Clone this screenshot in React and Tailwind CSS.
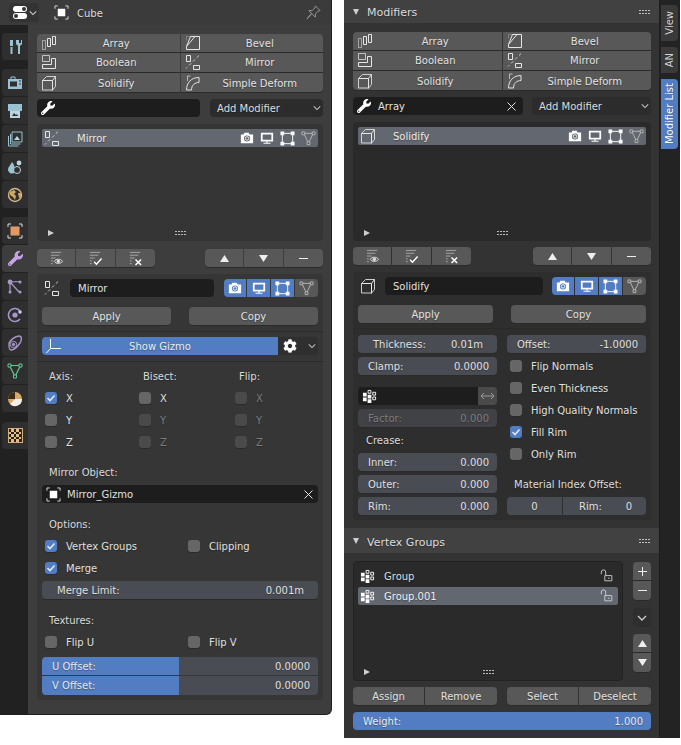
import { FaWrench, FaCog } from "react-icons/fa";

const Svg = ({ s = 16, className = "", children }) => (
  <svg width={s} height={s} viewBox="0 0 16 16" fill="none" stroke="currentColor" strokeWidth="1" className={`shrink-0 ${className}`}>
    {children}
  </svg>
);

const ArrayIcon = () => (
  <Svg>
    <path d="M1.5 5.5h3v9h-3z" opacity=".55" />
    <path d="M6.5 3.5h3v8h-3zM11.5 1.5h3v8h-3z" />
  </Svg>
);
const BevelIcon = () => (
  <Svg>
    <path d="M5.5 1.5h9v13h-13v-3z" />
    <path d="M5.5 1.5L1.5 1.5v4" opacity=".3" />
    <path d="M1.5 11.5L10 1.5" />
  </Svg>
);
const BooleanIcon = () => (
  <Svg>
    <path d="M1.5 1.5h7v6h-7z" opacity=".75" />
    <path d="M10.5 4.5h4v10h-13v-4h9z" />
  </Svg>
);
const MirrorIcon = () => (
  <Svg>
    <path d="M1.5 1.5h4v6h-4zM8.5 11.5h6v4h-6z" />
    <path d="M14 1.5L1 14.5" strokeDasharray="3 2.5" opacity=".8" />
  </Svg>
);
const SolidifyIcon = () => (
  <Svg>
    <path d="M1.5 5.5L5.5 1.5h9v10l-3 3.5h-10z" opacity=".85" />
    <path d="M1.5 5.5h10v10M11.5 5.5l3-4" />
  </Svg>
);
const DeformIcon = () => (
  <Svg>
    <path d="M1.5 15C1.5 8 6 2.5 14 2.5v5C10 7.5 6.5 10 6.5 15z" />
    <path d="M2.5 1h3M2.5 1v5" opacity=".7" />
  </Svg>
);
const CameraIcon = ({ dark = "#5f646c" }) => (
  <Svg s={14} className="text-white">
    <path d="M1 4h3l1-2h5l1 2h4v10H1z" fill="currentColor" stroke="none" />
    <circle cx="8" cy="8.5" r="3.5" fill={dark} stroke="none" />
    <circle cx="8" cy="8.5" r="2" fill="none" stroke="currentColor" />
  </Svg>
);
const MonitorIcon = () => (
  <Svg s={14} className="text-white">
    <path d="M2 3h12v8H2z" strokeWidth="2" />
    <path d="M4 14h8M8 11v3" strokeWidth="1.2" />
  </Svg>
);
const EditIcon = () => (
  <Svg s={15} className="text-white">
    <path d="M2.5 2.5h11v11h-11z" />
    <path d="M0.5 0.5h4v4h-4zM11.5 0.5h4v4h-4zM0.5 11.5h4v4h-4zM11.5 11.5h4v4h-4z" fill="currentColor" stroke="none" />
  </Svg>
);
const TriIcon = () => (
  <Svg s={15} className="text-[#b9b9b9]">
    <path d="M3 2.5h10L8 13z" />
    <path d="M1 1h3v3H1zM12 1h3v3h-3zM6.5 11.5h3v3h-3z" fill="#5a5a5a" />
  </Svg>
);
const ListEye = ({ x }) => (
  <Svg s={15} className="text-[#e0e0e0]">
    <path d="M2 1.5h11M2 4.5h9M2 7.5h5M2 10.5h2M2 13.5h2" opacity=".6" />
    {x === "eye" && (
      <>
        <path d="M5.5 11c2-3 7-3 9 0-2 3-7 3-9 0z" />
        <circle cx="10" cy="11" r="1.4" fill="currentColor" />
      </>
    )}
    {x === "check" && <path d="M6.5 11.5l2.5 2.5 5.5-6" strokeWidth="1.5" stroke="#fff" />}
    {x === "x" && <path d="M8 9l6 6M14 9l-6 6" strokeWidth="1.6" stroke="#fff" />}
  </Svg>
);
const VGroupIcon = () => (
  <Svg s={15} className="text-white">
    <path d="M1 4h4v4H1zM1 9h4v4H1zM6 6h4v4H6zM6 11h4v4H6z" fill="currentColor" stroke="none" />
    <path d="M6.5 1.5h3v3h-3zM11.5 3.5h3v3h-3zM11.5 8.5h3v3h-3z" />
  </Svg>
);
const LockIcon = () => (
  <Svg s={14} className="text-[#d5d5d5]">
    <path d="M1.5 6V3.5a2.5 2.5 0 0 1 5 0V7" />
    <path d="M5.5 7.5h8v6h-8z" />
    <path d="M9 10.5h2" />
  </Svg>
);
const Grip = () => (
  <div className="grid grid-cols-4 gap-x-px gap-y-[2px]">
    {Array.from({ length: 8 }).map((_, i) => (
      <div key={i} className="w-[2px] h-[1px] bg-[#bdbdbd]" />
    ))}
  </div>
);

const Chevron = ({ className = "" }) => (
  <svg width="10" height="6" viewBox="0 0 10 6" fill="none" stroke="currentColor" strokeWidth="1.3" className={className}>
    <path d="M1 1l4 4 4-4" />
  </svg>
);
const Tri = ({ down }) => (
  <svg width="9" height="7" viewBox="0 0 9 7" fill="#eee" className={down ? "rotate-180" : ""}>
    <path d="M4.5 0L9 7H0z" />
  </svg>
);

const Cell = ({ children, className = "" }) => (
  <div className={`flex items-center justify-center bg-[#585858] text-[#e2e2e2] shadow-[0_1px_0_#2a2a2a] ${className}`}>
    {typeof children === "string" ? <span>{children}</span> : children}
  </div>
);

const OpBtn = ({ icon, label, h, radius = "" }) => (
  <div className={`${h} ${radius} flex items-center bg-[#585858] text-[#e2e2e2] pl-[4px] shadow-[0_1px_0_#2a2a2a]`}>
    <div className="w-[16px] shrink-0 text-[#e6e6e6]">{icon}</div>
    <span className="flex-1 text-center pr-[4px]">{label}</span>
  </div>
);

const OpsGrid = () => (
  <div className="grid grid-cols-2 gap-x-px">
    <OpBtn icon={<ArrayIcon />} label="Array" h="h-[18px]" radius="rounded-tl-[4px]" />
    <OpBtn icon={<BevelIcon />} label="Bevel" h="h-[18px]" radius="rounded-tr-[4px]" />
    <OpBtn icon={<BooleanIcon />} label="Boolean" h="h-[19px] mt-px pb-[2px]" />
    <OpBtn icon={<MirrorIcon />} label="Mirror" h="h-[19px] mt-px pb-[2px]" />
    <OpBtn icon={<SolidifyIcon />} label="Solidify" h="h-[19px] mt-px" radius="rounded-bl-[4px]" />
    <OpBtn icon={<DeformIcon />} label="Simple Deform" h="h-[19px] mt-px" radius="rounded-br-[4px]" />
  </div>
);

const SearchRow = ({ text, fieldW, gap, addW }) => (
  <div className="flex mt-[7px] h-[18px]">
    <div className={`${fieldW} flex items-center bg-[#1d1d1d] rounded-[4px] pl-[4px] pr-[5px] text-white`}>
      <FaWrench className="w-[14px] h-[14px] shrink-0" />
      {text && <span className="ml-[7px] flex-1 text-[#e2e2e2]">{text}</span>}
      {text && <CloseX />}
    </div>
    <div className={`${addW} ${gap} flex items-center justify-between bg-[#2c2c2c] rounded-[4px] pl-[7px] pr-[2px] text-[#dedede]`}>
      <span>Add Modifier</span>
      <Chevron className="w-[8px] text-[#c4c4c4]" />
    </div>
  </div>
);

const CloseX = () => (
  <svg width="9" height="9" viewBox="0 0 9 9" stroke="#e6e6e6" strokeWidth="1" className="shrink-0 mr-[2px]">
    <path d="M.5.5l8 8M8.5.5l-8 8" />
  </svg>
);

const ListBox = ({ icon, label, height, bg }) => (
  <div className={`${height} ${bg} mt-[7px] rounded-[4px] p-[5px] pb-[3px] flex flex-col justify-between`}>
    <div className="h-[18px] flex items-center bg-[#63676f] rounded-[2px] pl-[2px] pr-[2px] text-[#ececec]">
      <div className="w-[33px] shrink-0 text-[#e6e6e6]">{icon}</div>
      <span className="flex-1">{label}</span>
      <div className="flex items-center gap-[6px]">
        <CameraIcon />
        <MonitorIcon />
        <EditIcon />
        <TriIcon />
      </div>
    </div>
    <div className="flex items-center h-[10px]">
      <svg width="6" height="6" viewBox="0 0 6 6" fill="#cfcfcf" className="ml-[6px]">
        <path d="M0 0l6 3-6 3z" />
      </svg>
      <div className="flex-1 flex justify-center pr-[12px]"><Grip /></div>
    </div>
  </div>
);

const Toolbar = ({ mt }) => (
  <div className={`flex justify-between h-[18px] ${mt}`}>
    <div className="flex gap-px">
      <Cell className="w-[38px] rounded-l-[4px]"><ListEye x="eye" /></Cell>
      <Cell className="w-[39px]"><ListEye x="check" /></Cell>
      <Cell className="w-[39px] rounded-r-[4px]"><ListEye x="x" /></Cell>
    </div>
    <div className="flex gap-px">
      <Cell className="w-[38px] rounded-l-[4px]"><Tri /></Cell>
      <Cell className="w-[39px]"><Tri down /></Cell>
      <Cell className="w-[39px] rounded-r-[4px]"><div className="w-[9px] h-[1px] bg-[#eee]" /></Cell>
    </div>
  </div>
);

const Toggles = () => (
  <div className="flex gap-px h-[18px] shrink-0">
    <div className="w-[22px] rounded-l-[4px] bg-[#527dc2] flex items-center justify-center"><CameraIcon dark="#527dc2" /></div>
    <div className="w-[23px] bg-[#527dc2] flex items-center justify-center"><MonitorIcon /></div>
    <div className="w-[23px] bg-[#527dc2] flex items-center justify-center"><EditIcon /></div>
    <div className="w-[23px] rounded-r-[4px] bg-[#585858] flex items-center justify-center"><TriIcon /></div>
  </div>
);

const BoxHeader = ({ icon, name, nameW, gapL }) => (
  <div className="flex items-center h-[18px]">
    <div className="w-[28px] pl-[2px] shrink-0 text-[#e6e6e6]">{icon}</div>
    <div className={`${nameW} h-[18px] flex items-center bg-[#1d1d1d] rounded-[4px] pl-[8px] text-[#e2e2e2]`}><span>{name}</span></div>
    <div className={gapL}><Toggles /></div>
  </div>
);

const Label = ({ children, className = "" }) => (
  <div className={`h-[14px] flex items-center text-[#dcdcdc] ${className}`}><span>{children}</span></div>
);

const Check = ({ label, on, off, w = "" }) => (
  <div className={`flex items-center h-[22px] ${w}`}>
    <div className={`w-[12px] h-[12px] rounded-[3px] flex items-center justify-center shadow-[0_1px_0_#2a2a2a] ${on ? "bg-[#527dc2]" : off ? "bg-[#4a4a4a]" : "bg-[#666666]"}`}>
      {on && (
        <svg width="10" height="10" viewBox="0 0 10 10" fill="none" stroke="#dfe8f5" strokeWidth="1.6">
          <path d="M1.5 5l2.5 2.5 4.5-5" />
        </svg>
      )}
    </div>
    <span className={`ml-[9px] ${off ? "text-[#7d7d7d]" : "text-[#e0e0e0]"}`}>{label}</span>
  </div>
);

const Num = ({ label, value, className = "", pl = "pl-[10px]", pr = "pr-[8px]", dim }) => (
  <div className={`h-[18px] flex items-center justify-between rounded-[4px] shadow-[0_1px_0_#2a2a2a] ${pl} ${pr} ${dim ? "bg-[#414246] text-[#7e7e7e]" : "bg-[#4a4c54] text-[#e0e0e0]"} ${className}`}>
    <span>{label}</span>
    <span>{value}</span>
  </div>
);

const Slider = ({ label, value, h, rounded, className = "" }) => (
  <div className={`${h} flex ${rounded} overflow-hidden ${className}`}>
    <div className="w-[137px] bg-[#527dc2] flex items-center pl-[10px] text-[#e8e8e8]"><span>{label}</span></div>
    <div className="flex-1 bg-[#4a4c54] flex items-center justify-end pr-[8px] text-[#e0e0e0]"><span>{value}</span></div>
  </div>
);

const Sep = ({ className = "" }) => <div className={`h-px -mx-[5px] bg-[#2a2a2a] ${className}`} />;

const TwoBtn = ({ w }) => (
  <div className="flex justify-between mt-[10px] h-[18px]">
    <Cell className={`${w} rounded-[4px]`}>Apply</Cell>
    <Cell className={`${w} rounded-[4px]`}>Copy</Cell>
  </div>
);

const SideTab = ({ active, children, className = "" }) => (
  <div className={`h-[28px] ml-[2px] rounded-l-[4px] flex items-center justify-center border-b border-[#222] ${active ? "bg-[#3d3d3d]" : "bg-[#2f2f2f]"} ${className}`}>
    {children}
  </div>
);

const Sidebar = () => (
  <div className="w-[28px] shrink-0 bg-[#212121] pt-[8px]">
    <SideTab>
      <Svg className="text-[#9ac2d2]">
        <path d="M3 1h3v6H3zM3.5 8h2v7h-2z" fill="currentColor" stroke="none" />
        <path d="M9 1v4l2 2v8h2V7l2-2V1l-1 0v3h-2V1z" fill="currentColor" stroke="none" />
      </Svg>
    </SideTab>
    <div className="mt-[8px]">
      <SideTab>
        <Svg className="text-[#9ac2d2]">
          <path d="M1 4h14v10H1z" fill="currentColor" stroke="none" />
          <path d="M4 4V2h4v2" />
          <path d="M3 6.5h7v5H3z" fill="#2f2f2f" stroke="none" />
          <path d="M12 6h2M12 9h2" stroke="#2f2f2f" />
        </Svg>
      </SideTab>
      <SideTab>
        <Svg className="text-[#9ac2d2]">
          <path d="M1 1h14v7H1z" fill="currentColor" stroke="none" />
          <path d="M3 8h10v7H3z" fill="#bcd6df" stroke="none" />
          <path d="M5 13l2-3 2 2 1-1 1 2z" fill="#2f2f2f" stroke="none" />
        </Svg>
      </SideTab>
      <SideTab>
        <Svg className="text-[#9ac2d2]">
          <path d="M1.5 5v10h10M3.5 3v10h10" />
          <path d="M5 1h10v10H5z" fill="#2f2f2f" stroke="currentColor" />
          <path d="M7 9l3-4 3 4z" fill="#bcd6df" stroke="none" />
        </Svg>
      </SideTab>
      <SideTab>
        <Svg className="text-[#9ac2d2]">
          <path d="M5 3c-2 4-4 5-4 8a4 4 0 0 0 6 3c1-3 1-8-2-11z" fill="currentColor" stroke="none" />
          <circle cx="12" cy="4" r="2.4" fill="#bcd6df" stroke="none" />
          <circle cx="10" cy="11" r="3.5" fill="#2f2f2f" stroke="#bcd6df" />
        </Svg>
      </SideTab>
      <SideTab>
        <Svg className="text-[#d2a868]">
          <circle cx="8" cy="8" r="6.5" fill="#2f2f2f" stroke="#d2b78a" strokeWidth="1.4" />
          <path d="M3 5l4-2 2 2-2 2 2 2-1 4-2-3-3-2zM11 6l3 0v4l-2 1z" fill="currentColor" stroke="none" />
        </Svg>
      </SideTab>
    </div>
    <div className="mt-[8px]">
      <SideTab>
        <Svg className="text-[#e09a66]">
          <path d="M3.5 3.5h9v9h-9z" fill="currentColor" stroke="none" />
          <path d="M1 4V1h3M12 1h3v3M15 12v3h-3M4 15H1v-3" stroke="#dcdcdc" />
        </Svg>
      </SideTab>
      <SideTab active>
        <FaWrench className="w-[15px] h-[15px] text-[#c7a6e6]" />
      </SideTab>
      <SideTab>
        <Svg className="text-[#a897c8]">
          <path d="M3 3l10-.5M3 3l9 10M3 3v9" strokeWidth="1.2" />
          <circle cx="3" cy="3" r="2.4" fill="currentColor" stroke="none" />
          <circle cx="13" cy="3" r="1.5" fill="currentColor" stroke="none" />
          <circle cx="3" cy="13" r="1.5" fill="currentColor" stroke="none" />
          <circle cx="13" cy="13" r="1.5" fill="currentColor" stroke="none" />
        </Svg>
      </SideTab>
      <SideTab>
        <Svg className="text-[#a897c8]">
          <path d="M13 4a6.5 6.5 0 1 0 0 8" strokeWidth="1.6" />
          <circle cx="8" cy="8" r="2.6" fill="currentColor" stroke="none" />
          <circle cx="13" cy="5" r="1.8" fill="#d0c4e6" stroke="none" />
        </Svg>
      </SideTab>
      <SideTab>
        <Svg className="text-[#a897c8]">
          <path d="M2 9c0-3 6-8 10-8 3 0 3 4 1 7s-6 7-9 7c-2 0-2-3-2-6z" strokeWidth="1.4" />
          <circle cx="6.5" cy="9.5" r="3.2" />
          <circle cx="6.5" cy="9.5" r="1.2" fill="currentColor" />
        </Svg>
      </SideTab>
      <SideTab>
        <Svg className="text-[#63c795]">
          <path d="M2.5 2.5h11L8 13.5z" strokeWidth="1.2" />
          <path d="M1 1h3v3H1zM12 1h3v3h-3zM6.5 12h3v3h-3z" fill="#2f2f2f" />
        </Svg>
      </SideTab>
      <SideTab>
        <Svg>
          <circle cx="8" cy="8" r="7" fill="#d7a866" stroke="none" />
          <path d="M8 8V1a7 7 0 0 0-7 7z" fill="#3a2c1a" stroke="none" />
          <path d="M8 8h7a7 7 0 0 1-12 5z" fill="#f4f0e8" stroke="none" />
        </Svg>
      </SideTab>
    </div>
    <div className="mt-[9px]">
      <SideTab>
        <div className="w-[15px] h-[15px] grid grid-cols-5 border border-[#d2ae78]">
          {Array.from({ length: 25 }).map((_, i) => (
            <div key={i} className={i % 2 === 0 ? "bg-[#2a2015]" : "bg-[#e0bd88]"} />
          ))}
        </div>
      </SideTab>
    </div>
  </div>
);

const LeftPanel = () => (
  <div className="w-[332px] h-[715px] shrink-0 flex flex-col bg-[#3d3d3d] rounded-br-[6px] overflow-hidden border-r border-b border-[#1f1f1f]">
    <div className="h-[25px] shrink-0 flex items-center bg-[#3b3b3b] pl-[9px] pr-[10px]">
      <div className="w-[30px] h-[19px] flex items-center gap-[2px] rounded-[4px] bg-[#333333] pl-[4px] text-white">
        <div className="flex flex-col gap-px">
          <div className="w-[14px] h-[6px] rounded-[3px] bg-white flex justify-end items-center pr-px">
            <div className="w-[4px] h-[4px] rounded-full bg-[#333333]" />
          </div>
          <div className="w-[14px] h-[6px] rounded-[3px] bg-white flex items-center pl-px">
            <div className="w-[4px] h-[4px] rounded-full bg-[#333333]" />
          </div>
        </div>
        <Chevron className="w-[8px] text-[#d0d0d0]" />
      </div>
      <Svg s={15} className="ml-[15px] text-[#dcdcdc]">
        <path d="M4 4h8v8H4z" fill="#fff" stroke="none" />
        <path d="M1 4V1h3M12 1h3v3M15 12v3h-3M4 15H1v-3" />
      </Svg>
      <span className="ml-[8px] flex-1 text-[#dcdcdc]">Cube</span>
      <Svg s={15} className="text-[#9a9a9a]">
        <path d="M10 1l5 5-2 .5-3 3 0 3.5L6 9l-5 6 5-6-3-3 3.5 0 3-3z" />
      </Svg>
    </div>
    <div className="flex-1 flex min-h-0">
      <Sidebar />
      <div className="flex-1 pl-[9px] pr-[8px] pt-[9px]">
        <OpsGrid />
        <SearchRow fieldW="w-[163px]" gap="ml-[10px]" addW="w-[113px]" />
        <ListBox icon={<MirrorIcon />} label="Mirror" height="h-[117px]" bg="bg-[#353535]" />
        <Toolbar mt="mt-[8px]" />
        <div className="mt-[7px] h-[426px] rounded-[4px] bg-[#363636] px-[5px] pt-[5px]">
          <BoxHeader icon={<MirrorIcon />} name="Mirror" nameW="w-[144px]" gapL="ml-[10px]" />
          <TwoBtn w="w-[129px]" />
          <Sep className="mt-[6px]" />
          <div className="flex mt-[5px] h-[18px]">
            <div className="w-[236px] flex items-center rounded-l-[4px] bg-[#527dc2] pl-[4px] text-[#eeeeee]">
              <Svg className="text-white">
                <path d="M4.5 1v9.5H15M4.5 10.5L0.5 15" />
              </Svg>
              <span className="flex-1 text-center pr-[20px]">Show Gizmo</span>
            </div>
            <div className="flex-1 flex items-center justify-between rounded-r-[4px] bg-[#2f2f2f] pl-[5px] pr-[2px] text-white">
              <FaCog className="w-[14px] h-[14px]" />
              <Chevron className="w-[8px] text-[#c0c0c0]" />
            </div>
          </div>
          <Sep className="mt-[6px]" />
          <div className="mt-[7px] flex pl-[3px]">
            <div className="w-[94px]">
              <Label className="pl-[4px] mb-[4px]">Axis:</Label>
              <Check label="X" on />
              <Check label="Y" />
              <Check label="Z" />
            </div>
            <div className="w-[96px]">
              <Label className="pl-[4px] mb-[4px]">Bisect:</Label>
              <Check label="X" />
              <Check label="Y" off />
              <Check label="Z" off />
            </div>
            <div>
              <Label className="pl-[4px] mb-[4px]">Flip:</Label>
              <Check label="X" off />
              <Check label="Y" off />
              <Check label="Z" off />
            </div>
          </div>
          <Label className="mt-[12px] pl-[7px]">Mirror Object:</Label>
          <div className="mt-[6px] h-[18px] flex items-center bg-[#1d1d1d] rounded-[4px] pl-[4px] pr-[3px] text-[#e2e2e2]">
            <Svg s={15} className="text-[#dcdcdc]">
              <path d="M4 4h8v8H4z" fill="#fff" stroke="none" />
              <path d="M1 4V1h3M12 1h3v3M15 12v3h-3M4 15H1v-3" />
            </Svg>
            <span className="ml-[6px] flex-1">Mirror_Gizmo</span>
            <CloseX />
          </div>
          <Label className="mt-[14px] pl-[7px]">Options:</Label>
          <div className="mt-[4px] pl-[3px] flex">
            <Check label="Vertex Groups" on w="w-[143px]" />
            <Check label="Clipping" />
          </div>
          <div className="pl-[3px]"><Check label="Merge" on /></div>
          <Num label="Merge Limit:" value="0.001m" pl="pl-[15px]" pr="pr-[14px]" className="mt-[2px]" />
          <Label className="mt-[14px] pl-[7px]">Textures:</Label>
          <div className="mt-[4px] pl-[3px] flex">
            <Check label="Flip U" w="w-[143px]" />
            <Check label="Flip V" />
          </div>
          <Slider label="U Offset:" value="0.0000" h="h-[18px]" rounded="rounded-t-[4px]" className="mt-[4px]" />
          <Slider label="V Offset:" value="0.0000" h="h-[19px]" rounded="rounded-b-[4px] [&>div]:pb-[2px]" className="mt-px" />
        </div>
      </div>
    </div>
  </div>
);

const PanelHead = ({ title, className = "" }) => (
  <div className={`flex items-center bg-[#414141] pl-[9px] pr-[9px] text-[#dcdcdc] ${className}`}>
    <svg width="6" height="6" viewBox="0 0 6 6" fill="#cfcfcf">
      <path d="M0 0h6L3 6z" />
    </svg>
    <span className="ml-[8px] flex-1 text-[11px]">{title}</span>
    <Grip />
  </div>
);

const VTab = ({ label, h, active, className = "" }) => (
  <div className={`${h} w-[17px] ml-px rounded-r-[4px] flex items-center justify-center ${active ? "bg-[#527dc2] text-white" : "bg-[#3a3a3a] text-[#d5d5d5]"} ${className}`}>
    <div className="[writing-mode:vertical-rl] rotate-180 whitespace-nowrap">{label}</div>
  </div>
);

const RightPanel = () => (
  <div className="w-[336px] h-[738px] shrink-0 flex">
    <div className="w-[315px] shrink-0 bg-[#333333]">
      <PanelHead title="Modifiers" className="h-[23px]" />
      <div className="pl-[9px] pr-[8px] pt-[9px]">
        <OpsGrid />
        <SearchRow text="Array" fieldW="w-[170px]" gap="ml-[9px]" addW="w-[119px]" />
        <ListBox icon={<SolidifyIcon />} label="Solidify" height="h-[119px]" bg="bg-[#2a2a2a]" />
        <Toolbar mt="mt-[6px]" />
        <div className="mt-[7px] h-[248px] rounded-[4px] bg-[#2e2e2e] px-[5px] pt-[5px]">
          <BoxHeader icon={<SolidifyIcon />} name="Solidify" nameW="w-[158px] ml-[-1px]" gapL="ml-[9px]" />
          <TwoBtn w="w-[135px]" />
          <Sep className="mt-[5px]" />
          <div className="mt-[6px] flex gap-[10px]">
            <div className="w-[139px]">
              <Num label="Thickness:" value="0.01m" pl="pl-[15px]" pr="pr-[14px]" />
              <Num label="Clamp:" value="0.0000" className="mt-[4px]" />
              <div className="mt-[12px] h-[18px] flex">
                <div className="flex-1 flex items-center bg-[#1d1d1d] rounded-l-[4px] pl-[4px]"><VGroupIcon /></div>
                <div className="w-[19px] flex items-center justify-center rounded-r-[4px] bg-[#4a4a4a] text-[#9a9a9a]">
                  <svg width="15" height="8" viewBox="0 0 15 8" fill="none" stroke="currentColor">
                    <path d="M1 4h13M4 1L1 4l3 3M11 1l3 3-3 3" />
                  </svg>
                </div>
              </div>
              <Num label="Factor:" value="0.000" dim className="mt-[4px]" />
              <Label className="mt-[6px] pl-[8px]">Crease:</Label>
              <Num label="Inner:" value="0.000" className="mt-[6px]" />
              <Num label="Outer:" value="0.000" className="mt-[4px]" />
              <Num label="Rim:" value="0.000" className="mt-[4px]" />
            </div>
            <div className="w-[139px]">
              <Num label="Offset:" value="-1.0000" pr="pr-[8px]" />
              <div className="mt-[2px] pl-[3px]">
                <Check label="Flip Normals" />
                <Check label="Even Thickness" />
                <Check label="High Quality Normals" />
                <Check label="Fill Rim" on />
                <Check label="Only Rim" />
              </div>
              <Label className="mt-[12px] pl-[7px]">Material Index Offset:</Label>
              <div className="mt-[6px] h-[18px] flex gap-px">
                <div className="w-[55px] flex items-center justify-center rounded-l-[4px] bg-[#4a4c54] text-[#e0e0e0]"><span>0</span></div>
                <div className="flex-1 flex items-center justify-between rounded-r-[4px] bg-[#4a4c54] pl-[16px] pr-[14px] text-[#e0e0e0]">
                  <span>Rim:</span>
                  <span>0</span>
                </div>
              </div>
            </div>
          </div>
        </div>
      </div>
      <PanelHead title="Vertex Groups" className="h-[25px] mt-[8px] pt-px" />
      <div className="pl-[9px] pr-[8px] pt-[8px]">
        <div className="flex justify-between">
          <div className="w-[270px] h-[120px] rounded-[4px] bg-[#2a2a2a] border border-[#222] px-[4px] pt-[5px] pb-[3px] flex flex-col">
            <div className="h-[18px] flex items-center pl-[2px] pr-[4px] text-[#dedede]">
              <VGroupIcon />
              <span className="ml-[9px] flex-1">Group</span>
              <LockIcon />
            </div>
            <div className="mt-[2px] h-[18px] flex items-center rounded-[2px] bg-[#63676f] pl-[2px] pr-[4px] text-[#f0f0f0]">
              <VGroupIcon />
              <span className="ml-[9px] flex-1">Group.001</span>
              <LockIcon />
            </div>
            <div className="mt-auto flex items-center h-[10px]">
              <svg width="6" height="6" viewBox="0 0 6 6" fill="#cfcfcf" className="ml-[6px]">
                <path d="M0 0l6 3-6 3z" />
              </svg>
              <div className="flex-1 flex justify-center pr-[12px]"><Grip /></div>
            </div>
          </div>
          <div className="w-[18px] flex flex-col">
            <Cell className="h-[18px] mt-px rounded-t-[4px]">
              <svg width="9" height="9" viewBox="0 0 9 9" stroke="#eee"><path d="M4.5 0v9M0 4.5h9" /></svg>
            </Cell>
            <Cell className="h-[19px] mt-px rounded-b-[4px]"><div className="w-[9px] h-px bg-[#eee]" /></Cell>
            <div className="mt-[8px] h-[19px] flex items-center justify-center rounded-[4px] bg-[#2e2e2e] text-[#d0d0d0]"><Chevron /></div>
            <Cell className="h-[18px] mt-[7px] rounded-t-[4px]"><Tri /></Cell>
            <Cell className="h-[19px] mt-px rounded-b-[4px]"><Tri down /></Cell>
          </div>
        </div>
        <div className="mt-[6px] flex justify-between h-[18px]">
          <div className="flex gap-px">
            <Cell className="w-[71px] rounded-l-[4px]">Assign</Cell>
            <Cell className="w-[72px] rounded-r-[4px]">Remove</Cell>
          </div>
          <div className="flex gap-px">
            <Cell className="w-[71px] rounded-l-[4px]">Select</Cell>
            <Cell className="w-[72px] rounded-r-[4px]">Deselect</Cell>
          </div>
        </div>
        <div className="mt-[7px] h-[18px] flex items-center justify-between rounded-[4px] bg-[#527dc2] pl-[10px] pr-[8px] text-[#eaeaea]">
          <span>Weight:</span>
          <span>1.000</span>
        </div>
      </div>
    </div>
    <div className="flex-1 bg-[#232323] border-l border-[#1d1d1d] pt-[5px]">
      <VTab label="View" h="h-[36px]" />
      <VTab label="AN" h="h-[26px]" className="mt-[6px]" />
      <VTab label="Modifier List" h="h-[70px]" active className="mt-[6px]" />
    </div>
  </div>
);

// text sits one pixel lower than flex centring puts it, so every span gets 2px on top
export default function App() {
  return (
    <div className="w-[681px] h-[745px] flex gap-[12px] bg-white font-['DejaVu_Sans',sans-serif] text-[10px] leading-none [text-shadow:0_1px_1px_rgba(0,0,0,0.3)] [&_span]:block [&_span]:pt-[2px]">
      <LeftPanel />
      <RightPanel />
    </div>
  );
}
